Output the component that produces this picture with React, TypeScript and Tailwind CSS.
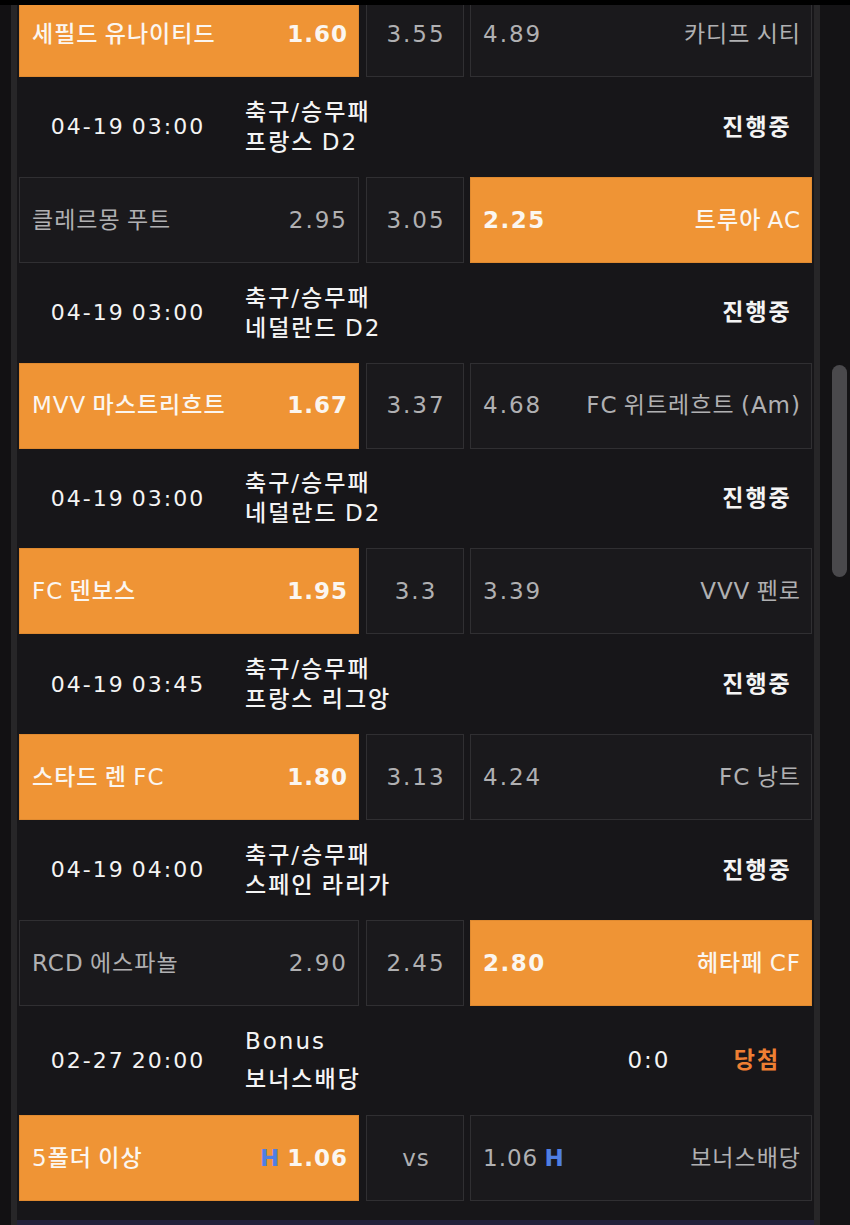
import React from "react";

type Side = "home" | "away";

type Match = {
  home: string;
  homeOdds: string;
  draw: string;
  awayOdds: string;
  away: string;
  pick: Side;
  date?: string;
  league?: string;
};

const matches: Match[] = [
  { home: "세필드 유나이티드", homeOdds: "1.60", draw: "3.55", awayOdds: "4.89", away: "카디프 시티", pick: "home", date: "04-19 03:00", league: "프랑스 D2" },
  { home: "클레르몽 푸트", homeOdds: "2.95", draw: "3.05", awayOdds: "2.25", away: "트루아 AC", pick: "away", date: "04-19 03:00", league: "네덜란드 D2" },
  { home: "MVV 마스트리흐트", homeOdds: "1.67", draw: "3.37", awayOdds: "4.68", away: "FC 위트레흐트 (Am)", pick: "home", date: "04-19 03:00", league: "네덜란드 D2" },
  { home: "FC 덴보스", homeOdds: "1.95", draw: "3.3", awayOdds: "3.39", away: "VVV 펜로", pick: "home", date: "04-19 03:45", league: "프랑스 리그앙" },
  { home: "스타드 렌 FC", homeOdds: "1.80", draw: "3.13", awayOdds: "4.24", away: "FC 낭트", pick: "home", date: "04-19 04:00", league: "스페인 라리가" },
  { home: "RCD 에스파뇰", homeOdds: "2.90", draw: "2.45", awayOdds: "2.80", away: "헤타페 CF", pick: "away" },
];

const boxBase = "flex h-[86px] items-center justify-between border pl-[12px] pr-[10px] text-[23px]";
const onBox = "border-[#e08a30] bg-[#ef9435] text-[#fbf6f0]";
const offBox = "border-[#302f32] bg-[#1a191c] text-[#b0b0b2]";

function OddsRow({ m }: { m: Match }) {
  const homeOn = m.pick === "home";
  const awayOn = m.pick === "away";
  return (
    <div className="flex px-[2px]">
      <div className={`${boxBase} w-[340px] ${homeOn ? onBox : offBox}`}>
        <span className={`tracking-[1px] ${homeOn ? "font-medium" : ""}`}>{m.home}</span>
        <span className={homeOn ? "font-bold tracking-[1px]" : "tracking-[2px]"}>{m.homeOdds}</span>
      </div>
      <div className={`${boxBase} ml-[7px] w-[98px] justify-center ${offBox}`}>
        <span className="tracking-[2px]">{m.draw}</span>
      </div>
      <div className={`${boxBase} ml-[6px] flex-1 ${awayOn ? onBox : offBox}`}>
        <span className={awayOn ? "font-bold tracking-[1.5px]" : "tracking-[2px]"}>{m.awayOdds}</span>
        <span className={`tracking-[1px] ${awayOn ? "font-medium" : ""}`}>{m.away}</span>
      </div>
    </div>
  );
}

function InfoRow({ m }: { m: Match }) {
  return (
    <div className="flex h-[99.75px] items-center text-[#f4f4f4]">
      <div className="w-[220px] pl-[2px] text-center text-[22px] font-medium tracking-[2px]">{m.date}</div>
      <div className="pl-[8px] text-[23px] font-medium leading-[30px] tracking-[2px]">
        <div>축구/승무패</div>
        <div>{m.league}</div>
      </div>
      <div className="flex-1" />
      <div className="w-[116px] pl-[2px] text-center text-[23px] font-bold tracking-[2px]">진행중</div>
    </div>
  );
}

function BonusBlock() {
  return (
    <>
      <div className="flex h-[109px] items-center text-[#f4f4f4]">
        <div className="w-[220px] pl-[2px] text-center text-[22px] font-medium tracking-[2px]">02-27 20:00</div>
        <div className="pl-[8px] text-[23px] font-medium leading-[38px] tracking-[2px]">
          <div>Bonus</div>
          <div>보너스배당</div>
        </div>
        <div className="flex-1" />
        <div className="w-[100px] pl-[2px] text-center text-[23px] font-medium tracking-[2px]">0:0</div>
        <div className="w-[116px] pl-[2px] text-center text-[23px] font-bold tracking-[2px] text-[#ee7f33]">당첨</div>
      </div>
      <div className="flex px-[2px]">
        <div className={`${boxBase} w-[340px] ${onBox}`}>
          <span className="font-medium tracking-[1px]">5폴더 이상</span>
          <span className="font-bold tracking-[1px]">
            <span className="text-[#4f7fe3]">H</span> 1.06
          </span>
        </div>
        <div className={`${boxBase} ml-[7px] w-[98px] justify-center ${offBox}`}>
          <span className="tracking-[1px]">vs</span>
        </div>
        <div className={`${boxBase} ml-[6px] flex-1 ${offBox}`}>
          <span className="tracking-[1px]">
            1.06 <span className="font-bold text-[#4f7fe3]">H</span>
          </span>
          <span className="tracking-[1px]">보너스배당</span>
        </div>
      </div>
    </>
  );
}

export default function App() {
  return (
    <div
      className="flex h-[1225px] w-[850px] flex-col overflow-hidden bg-black [word-spacing:-2px]"
      style={{ fontFamily: '"DejaVu Sans", "Noto Sans CJK KR", sans-serif' }}
    >
      <div className="h-[5px] shrink-0 bg-black" />
      <div className="flex min-h-0 flex-1">
        <div className="w-[11px] bg-[#121113]" />
        <div className="flex w-[809px] flex-col overflow-hidden border-x-[6px] border-x-[#272628] bg-[#171619]">
          <div className="-mt-[14px] flex flex-col">
            {matches.map((m, i) => (
              <React.Fragment key={i}>
                <OddsRow m={m} />
                {m.date ? <InfoRow m={m} /> : null}
              </React.Fragment>
            ))}
            <BonusBlock />
          </div>
          <div className="h-[19px] shrink-0" />
          <div className="h-[20px] shrink-0 bg-[#22213a]" />
        </div>
        <div className="flex w-[30px] flex-col bg-[#141315] pl-[12px] pt-[360px]">
          <div className="h-[212px] w-[15px] rounded-full bg-[#4a494c]" />
        </div>
      </div>
    </div>
  );
}
